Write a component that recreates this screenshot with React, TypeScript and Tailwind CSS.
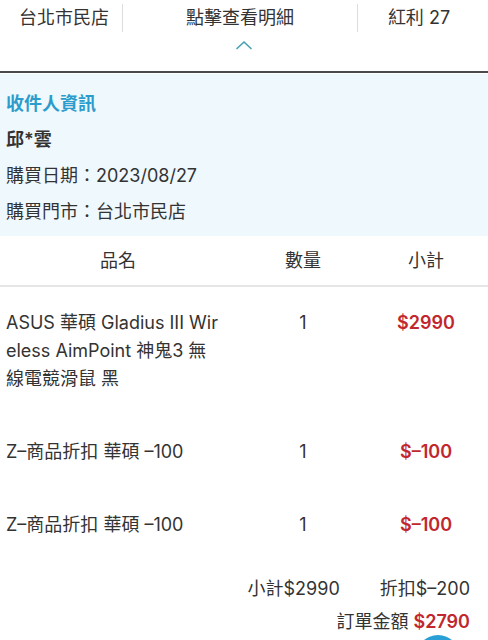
import React from 'react';

const font = { fontFamily: 'Inter, "Noto Sans CJK TC", sans-serif' };

interface Item {
  lines: string[];
  qty: number;
  price: string;
}

const items: Item[] = [
  { lines: ['ASUS 華碩 Gladius III Wir', 'eless AimPoint 神鬼3 無', '線電競滑鼠 黑'], qty: 1, price: '$2990' },
  { lines: ['Z–商品折扣 華碩 –100'], qty: 1, price: '$–100' },
  { lines: ['Z–商品折扣 華碩 –100'], qty: 1, price: '$–100' },
];

function ItemRow({ item }: { item: Item }) {
  return (
    <div className="flex items-start pt-[22px] pb-[23px] text-[18px] leading-[28px] text-[#333]">
      <div className="w-[236px] pl-[6px] whitespace-nowrap">
        {item.lines.map((l, i) => (
          <div key={i}>{l}</div>
        ))}
      </div>
      <div className="w-[134px] text-center">{item.qty}</div>
      <div className="flex-1 text-center font-semibold text-[#c1272d] pr-[6px]">{item.price}</div>
    </div>
  );
}

export default function App() {
  return (
    <div className="relative w-[488px] h-[640px] overflow-hidden bg-white" style={font}>
      {/* top summary bar */}
      <div className="flex items-center h-[36px] text-[18px] text-[#333]">
        <div className="w-[123px] pl-[19px] border-r border-[#ddd] h-[28px] leading-[28px]">台北市民店</div>
        <div className="w-[235px] text-center border-r border-[#ddd] h-[28px] leading-[28px]">點擊查看明細</div>
        <div className="flex-1 text-center h-[28px] leading-[28px] pr-[8px]">紅利 27</div>
      </div>
      <div className="flex justify-center h-[35px] pt-[3px]">
        <svg width="20" height="12" viewBox="0 0 20 12" fill="none">
          <path d="M3 9.5 L10 3 L17 9.5" stroke="#4aa3b3" strokeWidth="1.7" strokeLinecap="round" strokeLinejoin="round" />
        </svg>
      </div>
      <div className="h-[2px] bg-[#4a4a4a]" />

      {/* recipient info */}
      <div className="bg-[#eff8fd] px-[6px] pt-[12px] pb-[6px] text-[18px] text-[#333] leading-[36px] mt-[1px]">
        <div className="text-[#2b9ccb] font-semibold">收件人資訊</div>
        <div className="font-semibold">邱*雲</div>
        <div>購買日期：2023/08/27</div>
        <div>購買門市：台北市民店</div>
      </div>

      {/* table header */}
      <div className="flex items-center h-[51px] border-b-2 border-[#e6e6e6] text-[18px] text-[#333]">
        <div className="w-[236px] text-center">品名</div>
        <div className="w-[134px] text-center">數量</div>
        <div className="flex-1 text-center pr-[6px]">小計</div>
      </div>

      {items.map((item, i) => (
        <ItemRow key={i} item={item} />
      ))}

      {/* totals */}
      <div className="flex justify-end gap-[40px] pr-[18px] pt-[13px] text-[18px] leading-[28px] text-[#333]">
        <span>小計$2990</span>
        <span>折扣$–200</span>
      </div>
      <div className="flex justify-end pr-[18px] pt-[5px] text-[18px] leading-[28px] text-[#333]">
        <span>
          訂單金額 <span className="text-[#c1272d] font-semibold">$2790</span>
        </span>
      </div>

      {/* floating button peeking at the bottom */}
      <div className="absolute left-[416px] top-[635px] w-[44px] h-[44px] rounded-full bg-[#2a9fd6]" />
    </div>
  );
}
